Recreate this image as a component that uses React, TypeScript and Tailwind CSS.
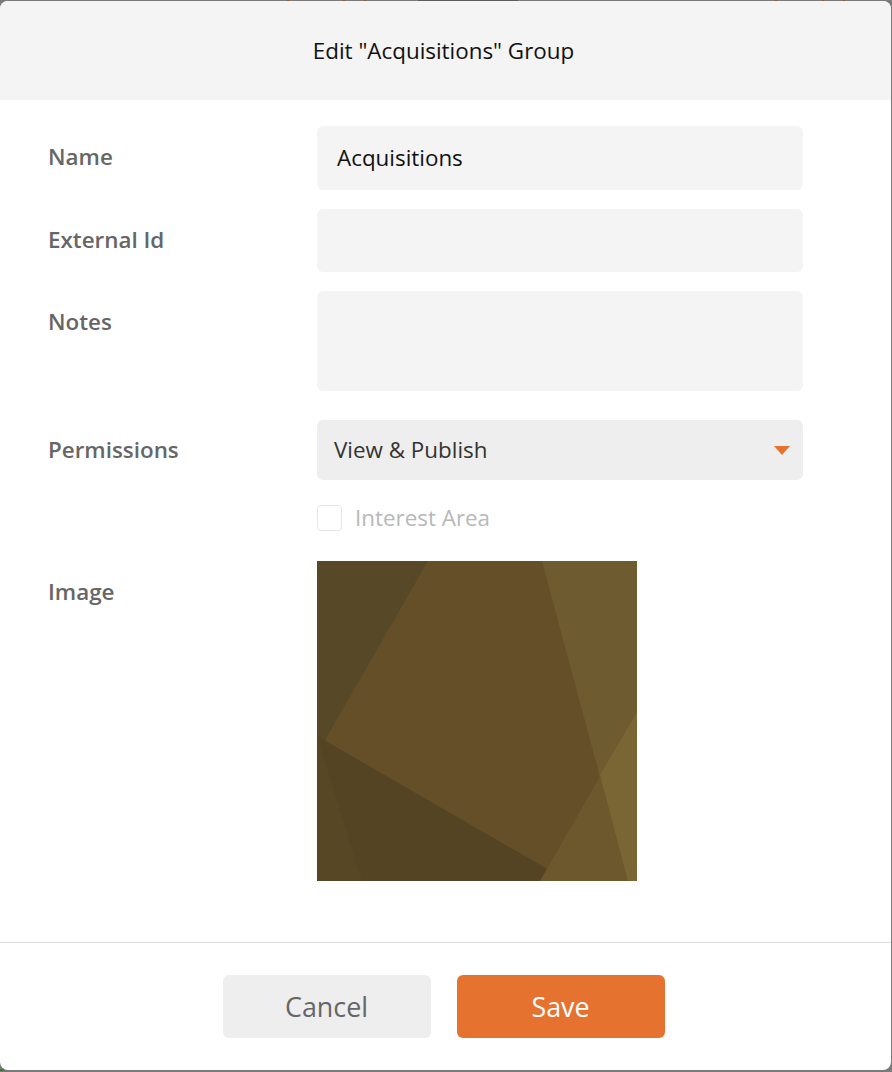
import React from "react";

const font = "font-['Open_Sans',sans-serif]";

function Row({ label, children, top = "pt-0" }: { label: string; children: React.ReactNode; top?: string }) {
  return (
    <div className="flex">
      <div className={`w-[317px] pl-[48px] text-[22.4px] leading-[30px] font-semibold text-[#666666] ${top}`}>{label}</div>
      <div className="w-[486px]">{children}</div>
    </div>
  );
}

function Artwork() {
  return (
    <svg width="320" height="320" viewBox="0 0 320 320" className="block">
      <rect width="320" height="320" fill="#644f29" />
      <polygon points="0,0 111,0 0,193" fill="#574828" />
      <polygon points="225,0 320,0 320,320 311,320" fill="#6f5b30" />
      <polygon points="0,175 251,320 0,320" fill="#544424" />
      <polygon points="0,175 45,320 0,320" fill="#574725" />
      <polygon points="320,151 320,320 223,320" fill="#6d582e" />
      <polygon points="283,214 320,151 320,320 311,320" fill="#7a6535" />
    </svg>
  );
}

// bits of the page behind the dialog that show along its top edge
function BackdropEdge() {
  return (
    <svg width="892" height="1" viewBox="0 0 892 1" className="block">
      <rect width="892" height="1" fill="#7a7a7a" />
      <rect x="418" width="100" height="1" fill="#5c5c5c" />
      <rect x="287" width="2" height="1" fill="#a0552a" />
      <rect x="343" width="2" height="1" fill="#a0552a" />
      <rect x="364" width="2" height="1" fill="#a0552a" />
      <rect x="775" width="2" height="1" fill="#a0552a" />
      <rect x="822" width="2" height="1" fill="#a0552a" />
      <rect x="843" width="2" height="1" fill="#a0552a" />
    </svg>
  );
}

export default function App() {
  return (
    <div className={`${font} relative w-[892px] h-[1072px] bg-[#7a7a7a] overflow-hidden`}>
      <BackdropEdge />
      <div className="h-[1069px] w-[891px] bg-white rounded-[8px] overflow-hidden flex flex-col">
        <div className="h-[99px] shrink-0 bg-[#f4f4f4] pr-[4px] flex items-center justify-center text-[22.4px] text-[#111111]">
          Edit "Acquisitions" Group
        </div>
        <div className="h-[842px] shrink-0 pt-[26px] flex flex-col">
          <Row label="Name" top="pt-[16px]">
            <div className="h-[64px] rounded-[6px] bg-[#f4f4f4] pl-[20px] flex items-center text-[22.4px] text-[#111111]">
              Acquisitions
            </div>
          </Row>
          <div className="mt-[19px]">
            <Row label="External Id" top="pt-[16px]">
              <div className="h-[63px] rounded-[6px] bg-[#f4f4f4]" />
            </Row>
          </div>
          <div className="mt-[19px]">
            <Row label="Notes" top="pt-[16px]">
              <div className="h-[100px] rounded-[6px] bg-[#f4f4f4]" />
            </Row>
          </div>
          <div className="mt-[29px]">
            <Row label="Permissions" top="pt-[15px]">
              <div className="h-[60px] rounded-[6px] bg-[#eeeeee] pl-[17px] pr-[13px] flex items-center justify-between text-[22.4px] text-[#333333]">
                <span>View &amp; Publish</span>
                <svg width="16" height="9" viewBox="0 0 16 9">
                  <polygon points="0,0 16,0 8,9" fill="#e6722f" />
                </svg>
              </div>
            </Row>
          </div>
          <div className="mt-[25px]">
            <Row label="">
              <div className="flex items-center h-[26px]">
                <div className="w-[25px] h-[26px] rounded-[4px] border border-[#e6e6e6] bg-white" />
                <span className="ml-[13px] text-[22.4px] text-[#b8b8b8]">Interest Area</span>
              </div>
            </Row>
          </div>
          <div className="mt-[30px]">
            <Row label="Image" top="pt-[16px]">
              <Artwork />
            </Row>
          </div>
        </div>
        <div className="flex-1 border-t border-[#dddddd] pt-[32px] pr-[4px] flex justify-center gap-[26px]">
          <button className="w-[208px] h-[63px] pt-[2px] rounded-[6px] bg-[#eeeeee] text-[26.88px] text-[#666666]">Cancel</button>
          <button className="w-[208px] h-[63px] pt-[2px] rounded-[6px] bg-[#e6722f] text-[26.88px] text-white">Save</button>
        </div>
      </div>
      <div className="absolute left-0 bottom-[1px] w-[4px] h-[2px] bg-[#3f7a3a]" />
    </div>
  );
}
